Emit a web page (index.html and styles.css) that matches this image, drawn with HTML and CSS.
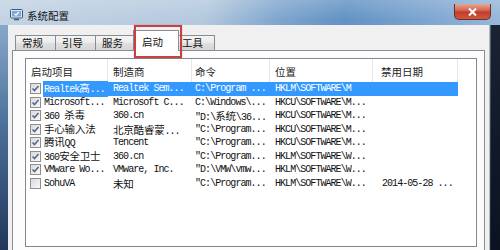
FILE: index.html
```html
<!DOCTYPE html>
<html>
<head>
    <meta charset="utf-8">
    <link rel="stylesheet" href="styles.css">
</head>
<body>
    <div class="window">
        <div class="titlebar">
            <svg class="app-icon" width="13" height="12" viewBox="0 0 13 12">
                <rect x="0.5" y="0.5" width="12" height="8.5" rx="1" fill="#dfe9f3" stroke="#3b5a82"/>
                <rect x="2" y="2" width="9" height="5.5" fill="#7fa8d4"/>
                <path d="M4 10.5 H9" stroke="#3b5a82" stroke-width="1.5"/>
                <path d="M4.5 4.8 L6 6.2 L8.8 3" fill="none" stroke="#fff" stroke-width="1.2"/>
            </svg>
            <span class="title">系统配置</span>
            <div class="close">
                <svg width="9" height="8" viewBox="0 0 9 8">
                    <path d="M1 0.5 L8 7.5 M8 0.5 L1 7.5" stroke="#fff" stroke-width="2"/>
                </svg>
            </div>
        </div>
        <div class="frame">
            <div class="client">
                <div class="tabs">
                    <div class="tab">常规</div>
                    <div class="tab">引导</div>
                    <div class="tab">服务</div>
                    <div class="tab active">启动</div>
                    <div class="tab last">工具</div>
                </div>
                <!-- red note box drawn over the active tab -->
                <div class="mark"></div>

                <div class="panel">
                    <div class="list">
                        <div class="head">
                            <div class="c1">启动项目</div>
                            <div class="c2">制造商</div>
                            <div class="c3">命令</div>
                            <div class="c4">位置</div>
                            <div class="c5">禁用日期</div>
                        </div>

                        <div class="row sel">
                            <div class="c1"><span class="cb"><svg width="9" height="9" viewBox="0 0 9 9"><path d="M1.5 4.5 L3.5 6.5 L7.5 2" fill="none" stroke="#56688c" stroke-width="1.6"/></svg></span><span class="label">Realtek<span class="zh">高</span>...</span></div>
                            <div class="c2">Realtek Sem...</div>
                            <div class="c3">C:\Program ...</div>
                            <div class="c4">HKLM\SOFTWARE\M</div>
                            <div class="c5"></div>
                        </div>
                        <div class="row">
                            <div class="c1"><span class="cb"><svg width="9" height="9" viewBox="0 0 9 9"><path d="M1.5 4.5 L3.5 6.5 L7.5 2" fill="none" stroke="#56688c" stroke-width="1.6"/></svg></span><span class="label">Microsoft...</span></div>
                            <div class="c2">Microsoft C...</div>
                            <div class="c3">C:\Windows\...</div>
                            <div class="c4">HKCU\SOFTWARE\M...</div>
                            <div class="c5"></div>
                        </div>
                        <div class="row">
                            <div class="c1"><span class="cb"><svg width="9" height="9" viewBox="0 0 9 9"><path d="M1.5 4.5 L3.5 6.5 L7.5 2" fill="none" stroke="#56688c" stroke-width="1.6"/></svg></span><span class="label">360 <span class="zh">杀毒</span></span></div>
                            <div class="c2">360.cn</div>
                            <div class="c3">"D:\<span class="zh">系统</span>\36...</div>
                            <div class="c4">HKCU\SOFTWARE\M...</div>
                            <div class="c5"></div>
                        </div>
                        <div class="row">
                            <div class="c1"><span class="cb"><svg width="9" height="9" viewBox="0 0 9 9"><path d="M1.5 4.5 L3.5 6.5 L7.5 2" fill="none" stroke="#56688c" stroke-width="1.6"/></svg></span><span class="label"><span class="zh">手心输入法</span></span></div>
                            <div class="c2"><span class="zh">北京酷睿蒙</span>...</div>
                            <div class="c3">"C:\Program...</div>
                            <div class="c4">HKCU\SOFTWARE\M...</div>
                            <div class="c5"></div>
                        </div>
                        <div class="row">
                            <div class="c1"><span class="cb"><svg width="9" height="9" viewBox="0 0 9 9"><path d="M1.5 4.5 L3.5 6.5 L7.5 2" fill="none" stroke="#56688c" stroke-width="1.6"/></svg></span><span class="label"><span class="zh">腾讯</span>QQ</span></div>
                            <div class="c2">Tencent</div>
                            <div class="c3">"C:\Program...</div>
                            <div class="c4">HKCU\SOFTWARE\M...</div>
                            <div class="c5"></div>
                        </div>
                        <div class="row">
                            <div class="c1"><span class="cb"><svg width="9" height="9" viewBox="0 0 9 9"><path d="M1.5 4.5 L3.5 6.5 L7.5 2" fill="none" stroke="#56688c" stroke-width="1.6"/></svg></span><span class="label">360<span class="zh">安全卫士</span></span></div>
                            <div class="c2">360.cn</div>
                            <div class="c3">"C:\Program...</div>
                            <div class="c4">HKLM\SOFTWARE\W...</div>
                            <div class="c5"></div>
                        </div>
                        <div class="row">
                            <div class="c1"><span class="cb"><svg width="9" height="9" viewBox="0 0 9 9"><path d="M1.5 4.5 L3.5 6.5 L7.5 2" fill="none" stroke="#56688c" stroke-width="1.6"/></svg></span><span class="label">VMware Wo...</span></div>
                            <div class="c2">VMware, Inc.</div>
                            <div class="c3">"D:\VMW\vmw...</div>
                            <div class="c4">HKLM\SOFTWARE\W...</div>
                            <div class="c5"></div>
                        </div>
                        <div class="row">
                            <div class="c1"><span class="cb"></span><span class="label">SohuVA</span></div>
                            <div class="c2"><span class="zh">未知</span></div>
                            <div class="c3">"C:\Program...</div>
                            <div class="c4">HKLM\SOFTWARE\W...</div>
                            <div class="c5">2014-05-28 ...</div>
                        </div>
                    </div>
                </div>
            </div>
        </div>
    </div>
</body>
</html>
```

FILE: styles.css
```css
:root {
    --client: #f0f0f0;
    --tab-border: #898c95;
    --list-border: #828790;
    --select: #3399ff;
    --note: #c8403f;
}

body {
    margin: 0;
    width: 500px;
    height: 250px;
    overflow: hidden;
}

.window {
    display: flex;
    flex-direction: column;
    width: 500px;
    height: 250px;
    background:
        linear-gradient(180deg, rgba(255, 255, 255, 0.18), rgba(255, 255, 255, 0) 20px),
        linear-gradient(100deg, #c3d3e4 0%, #b4c9de 38%, #7ea5cd 52%, #6292c4 64%, #82a9d2 82%, #a5c1dd 100%);
}

/* title bar */

.titlebar {
    display: flex;
    align-items: center;
    height: 25px;
    padding-left: 10px;
}

.app-icon {
    margin-top: 5px;
}

.title {
    margin-left: 4px;
    margin-top: 5px;
    font-family: "Noto Sans CJK SC", sans-serif;
    font-size: 10.5px;
    color: #111;
}

.close {
    display: flex;
    align-items: center;
    justify-content: center;
    align-self: flex-start;
    width: 37px;
    height: 16px;
    margin-top: 4px;
    margin-left: auto;
    margin-right: 9px;
    box-sizing: border-box;
    border: 1px solid #6c2e28;
    border-top: none;
    border-radius: 0 0 5px 5px;
    background: linear-gradient(180deg, #e6a595 0%, #d66a53 40%, #c23d2a 55%, #d0583f 100%);
}

/* window body */

.frame {
    flex: 1;
    display: flex;
    padding: 0 10px 0 8px;
    background:
        linear-gradient(90deg, rgba(0, 0, 0, 0) 490px, rgba(8, 12, 22, 0.85) 491px),
        linear-gradient(180deg, #86a8ca 0%, #4b6f99 45%, #22375a 100%);
}

.client {
    position: relative;
    flex: 1;
    display: flex;
    flex-direction: column;
    background: var(--client);
    border-right: 1px solid #b8b8b8;
}

.tabs {
    display: flex;
    align-items: flex-end;
    height: 20px;
    margin-top: 5px;
    padding-left: 7px;
    font-family: "Noto Sans CJK SC", sans-serif;
    font-size: 10.5px;
    color: #111;
}

.tab {
    box-sizing: border-box;
    width: 41px;
    height: 15px;
    margin-right: -1px;
    padding-left: 6px;
    line-height: 14px;
    border: 1px solid var(--tab-border);
    border-bottom: none;
    background: linear-gradient(180deg, #f4f4f4 0%, #ececec 45%, #dedede 55%, #d6d6d6 100%);
}

.tab.active {
    position: relative;
    z-index: 1;
    width: 46px;
    height: 21px;
    margin: 0 -2px -1px -2px;
    padding-left: 8px;
    line-height: 22px;
    background: #fff;
}

.tab.last {
    width: 38px;
    padding-left: 4px;
}

.mark {
    position: absolute;
    left: 126px;
    top: 0;
    z-index: 2;
    width: 48px;
    height: 33px;
    box-sizing: border-box;
    border: 2px solid var(--note);
    box-shadow: 0 0 1px rgba(200, 64, 63, 0.6);
}

.panel {
    flex: 1;
    margin: 0 4px 0 4px;
    padding: 7px 7px 0 12px;
    border: 1px solid var(--tab-border);
    border-bottom: none;
    background: #fcfcfc;
}

/* startup list */

.list {
    height: 189px;
    box-sizing: border-box;
    border: 1px solid var(--list-border);
    background: #fff;
    overflow: hidden;
}

.head,
.row {
    display: flex;
}

.c1 { width: 82px; }
.c2 { width: 84px; }
.c3 { width: 78px; }
.c4 { width: 103px; }
.c5 { width: 85px; }

.head {
    height: 23px;
    font-family: "Noto Sans CJK SC", sans-serif;
    font-size: 10.5px;
    color: #1c1c1c;
}

.head > div {
    box-sizing: border-box;
    padding-left: 5px;
    line-height: 26px;
    border-right: 1px solid #e6e6e6;
    white-space: nowrap;
}

.head .c3 { padding-left: 3px; }
.head .c5 { padding-left: 8px; }

.row {
    height: 13.5px;
    font-family: "Liberation Mono", "Noto Sans CJK SC", monospace;
    font-size: 10px;
    letter-spacing: -0.95px;
    line-height: 13.5px;
    color: #111;
}

.row > div {
    box-sizing: border-box;
    padding-left: 5px;
    white-space: nowrap;
}

.row .c1 {
    display: flex;
    align-items: center;
    padding-left: 4px;
}

.row .c3 { padding-left: 3px; }
.row .c5 { padding-left: 9px; }

.zh {
    font-family: "Noto Sans CJK SC", sans-serif;
    font-size: 10.5px;
    letter-spacing: -0.2px;
}

.cb {
    display: flex;
    align-items: center;
    justify-content: center;
    flex: none;
    width: 11px;
    height: 11px;
    box-sizing: border-box;
    margin-right: 2px;
    border: 1px solid #8e8f8f;
    background: linear-gradient(135deg, #dadada, #f8f8f8);
}

.label {
    flex: 1;
    padding-left: 1px;
}

.row.sel .label,
.row.sel .c2,
.row.sel .c3,
.row.sel .c4,
.row.sel .c5 {
    background: var(--select);
    color: #fff;
}
```
